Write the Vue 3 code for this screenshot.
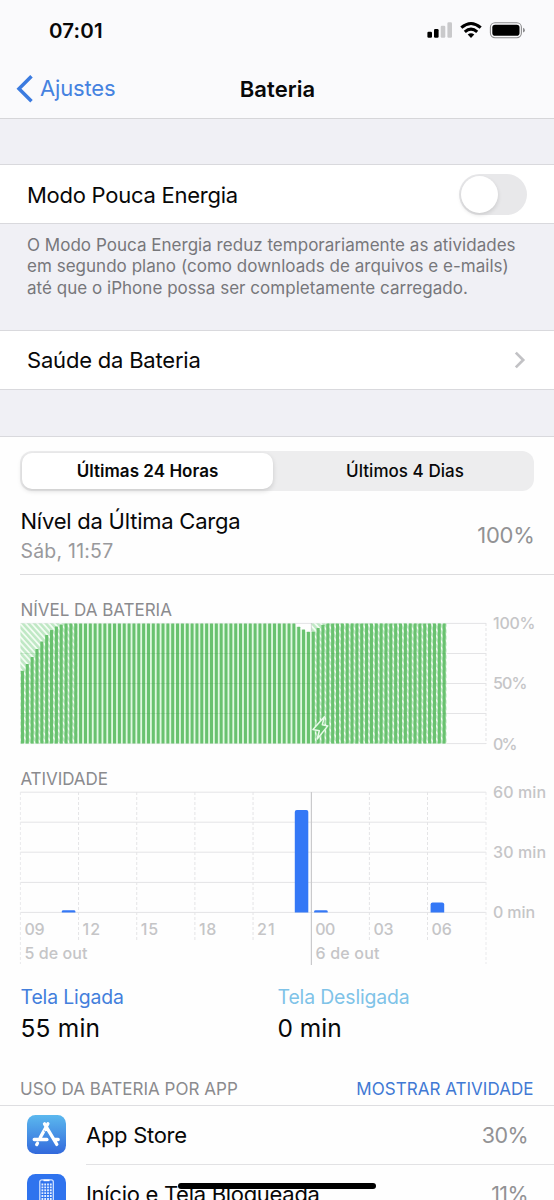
<script setup>
const X0 = 20.4
const PITCH = 4.847
const TOP = 23.4
const BOTTOM = 143.6
const special = {
  0: 70.8, 1: 64, 2: 57, 3: 49, 4: 41.5, 5: 35, 6: 30, 7: 26.5, 8: 24.4,
  57: 26.7, 58: 29.6, 59: 31.8, 60: 31.8, 61: 28, 62: 24.8,
}
const bars = Array.from({ length: 88 }, (_, i) => {
  const y = special[i] ?? TOP
  return { x: X0 + 0.5 + i * PITCH, y, h: BOTTOM - y }
})
const gaps = bars
  .map((b, i) => ({ x: b.x + 3.1, y: Math.max(b.y, bars[i + 1]?.y ?? b.y), i }))
  .filter((g) => g.i >= 11 && g.i < 60)
const hourX = (h) => X0 + (h * 465.3) / 24
const hours = ['09', '12', '15', '18', '21', '00', '03', '06'].map((t, i) => ({ t, x: hourX(i * 3) }))
const levelGrid = [23.4, 53.5, 83.5, 113.5, 143.6]
const activityGrid = [32.2, 62.2, 92.2, 122.4, 152.4]
const levelLabels = [{ t: '100%', y: 29.2, w: 42.5 }, { t: '50%', y: 89.3, w: 34.5 }, { t: '0%', y: 149.5, w: 24.5 }]
const activityLabels = [{ t: '60 min', y: 38, w: 53 }, { t: '30 min', y: 98, w: 53 }, { t: '0 min', y: 158, w: 42 }]
</script>

<template>
  <main class="phone">
    <header class="top">
      <div class="status">
        <span class="time">07:01</span>
        <svg class="status-icons" width="100" height="20" viewBox="0 0 100 20">
          <rect x="0.4" y="11.8" width="4.6" height="6" rx="1.2" />
          <rect x="7" y="9" width="4.6" height="8.8" rx="1.2" />
          <g fill="#c9c9cb">
            <rect x="13.7" y="5.8" width="4.6" height="12" rx="1.2" />
            <rect x="20.4" y="2.2" width="4.6" height="15.6" rx="1.2" />
          </g>
          <g fill="none" stroke="#000" stroke-width="3.1">
            <path d="M34.3 7.6 Q44 -0.6 53.7 7.6" />
            <path d="M37.8 11.8 Q44 6.4 50.2 11.8" />
          </g>
          <path d="M40.7 14.5 Q44 12.1 47.3 14.5 L44 17.9 Z" />
          <rect x="63.4" y="2.7" width="31" height="15" rx="4.6" fill="none" stroke="#8d8d8f" stroke-width="1.1" />
          <rect x="65.3" y="4.7" width="27.2" height="11" rx="2.8" />
          <path d="M96 7.8 Q97.9 8.5 97.9 10.2 Q97.9 11.9 96 12.6 Z" fill="#8d8d8f" />
        </svg>
      </div>
      <nav class="nav">
        <div class="back">
          <svg width="18" height="30" viewBox="0 0 18 30"><path d="M16.5 2.2 L4 14.7 L16.5 27.2" fill="none" stroke="#3b7be0" stroke-width="3.5" /></svg>
          <span>Ajustes</span>
        </div>
        <h1>Bateria</h1>
      </nav>
    </header>

    <section class="row power">
      <span>Modo Pouca Energia</span>
      <div class="switch"><i></i></div>
    </section>
    <div class="note">
      <p>O Modo Pouca Energia reduz temporariamente as atividades</p>
      <p>em segundo plano (como downloads de arquivos e e-mails)</p>
      <p>até que o iPhone possa ser completamente carregado.</p>
    </div>
    <section class="row health">
      <span>Saúde da Bateria</span>
      <svg width="13" height="18" viewBox="0 0 13 18"><path d="M1.8 1.6 L9.2 9 L1.8 16.4" fill="none" stroke="#c2c2c5" stroke-width="2.7" /></svg>
    </section>

    <section class="usage">
      <div class="segments">
        <span class="seg active"><b>Últimas 24 Horas</b></span>
        <span class="seg"><em>Últimos 4 Dias</em></span>
      </div>
      <div class="charge">
        <div>
          <p class="charge-title">Nível da Última Carga</p>
          <p class="charge-sub">Sáb, 11:57</p>
        </div>
        <span class="charge-value">100%</span>
      </div>

      <svg class="chart" width="554" height="160" viewBox="0 0 554 160">
        <defs>
          <pattern id="hatch" width="4.3" height="4.3" patternUnits="userSpaceOnUse" patternTransform="rotate(-42)">
            <rect width="4.3" height="4.3" fill="#f3fcf3" />
            <rect width="2.5" height="4.3" fill="#bfe8c4" />
          </pattern>
        </defs>
        <text class="caption" x="20.4" y="15.7" textLength="151.5">NÍVEL DA BATERIA</text>
        <path v-for="y in levelGrid" :key="y" :d="`M20.4 ${y} H486`" stroke="#e4e4e6" />
        <path d="M486 23 V144" stroke="#e3e3e5" stroke-dasharray="3 2" />
        <path d="M311.4 23 V144" stroke="#c8c8ca" />
        <rect x="20.4" :y="TOP" width="57.5" :height="BOTTOM - TOP" fill="url(#hatch)" />
        <rect x="311.6" :y="TOP" width="135" :height="BOTTOM - TOP" fill="url(#hatch)" />
        <rect v-for="g in gaps" :key="g.i" :x="g.x" :y="g.y" width="1.75" :height="BOTTOM - g.y" fill="#e0fae1" />
        <rect v-for="(b, i) in bars" :key="i" :x="b.x" :y="b.y" width="3.1" :height="b.h" rx="0.5" fill="#69c26f" />
        <path v-for="y in [53.5, 83.5, 113.5]" :key="'g' + y" :d="`M20.4 ${y} H446`" stroke="#359640" stroke-opacity=".14" />
        <path d="M324.4 116.8 L313 129.6 L319.3 130.8 L317.2 139 L327.8 125.9 L322.3 124.8 Z" fill="#69c26f" stroke="#e9fbe9" stroke-width="1.5" stroke-linejoin="round" />
        <text v-for="l in levelLabels" :key="l.t" class="axis" x="493" :y="l.y" :textLength="l.w">{{ l.t }}</text>
      </svg>

      <svg class="chart" width="554" height="210" viewBox="0 0 554 210">
        <text class="caption" x="20.4" y="24.5" textLength="87.5">ATIVIDADE</text>
        <path v-for="y in activityGrid" :key="y" :d="`M20.4 ${y} H486`" stroke="#e4e4e6" />
        <path d="M20.4 32 V204 M486 32 V204" stroke="#eaeaec" stroke-dasharray="3 2" />
        <path v-for="h in [3, 6, 9, 12, 18, 21]" :key="h" :d="`M${hourX(h)} 32 V182`" stroke="#e4e4e6" stroke-dasharray="3 2" />
        <path d="M311.4 32 V205" stroke="#cacacc" stroke-width="1.2" />
        <g fill="#3478f6">
          <path d="M61.8 152.4 V151.4 Q61.8 150.2 63.3 150.2 H73.9 Q75.4 150.2 75.4 151.4 V152.4 Z" />
          <path d="M294.8 152.4 V52 Q294.8 50 296.8 50 H306.3 Q308.3 50 308.3 52 V152.4 Z" />
          <path d="M314.1 152.4 V151.4 Q314.1 150.2 315.6 150.2 H326.2 Q327.7 150.2 327.7 151.4 V152.4 Z" />
          <path d="M430.6 152.4 V144.4 Q430.6 142.4 432.6 142.4 H442.2 Q444.2 142.4 444.2 144.4 V152.4 Z" />
        </g>
        <text v-for="h in hours" :key="h.t" class="axis" :x="h.x + 4" y="174.5" :textLength="h.t.includes('1') ? 17.5 : 20.2">{{ h.t }}</text>
        <text class="axis" x="24.4" y="199" textLength="63">5 de out</text>
        <text class="axis" x="315.4" y="199" textLength="64">6 de out</text>
        <text v-for="l in activityLabels" :key="l.t" class="axis" x="493" :y="l.y" :textLength="l.w">{{ l.t }}</text>
      </svg>

      <div class="totals">
        <div><p class="on">Tela Ligada</p><p class="total spaced">55 min</p></div>
        <div><p class="off">Tela Desligada</p><p class="total">0 min</p></div>
      </div>
      <div class="list-head"><span>USO DA BATERIA POR APP</span><a>MOSTRAR ATIVIDADE</a></div>
      <div class="app">
        <svg width="39" height="39" viewBox="0 0 39 39">
          <defs><linearGradient id="store" x2="0" y2="1"><stop stop-color="#5bb8ee" /><stop offset="1" stop-color="#3269dc" /></linearGradient></defs>
          <rect width="39" height="39" rx="8.5" fill="url(#store)" />
          <g stroke="#fff" stroke-width="3.3" stroke-linecap="round" fill="none">
            <path d="M20.9 8.8 L13.2 22.6 M17.5 8.8 L29.8 29.4 M7.2 24.5 H20 M27.2 24.5 H31.2 M10.5 28.2 L9.7 29.6" />
          </g>
          <path d="M17.3 15.5 L22.8 25" stroke="#448ce3" stroke-width="0.8" />
        </svg>
        <div class="app-body"><span>App Store</span><span class="pct">30%</span></div>
      </div>
      <div class="app">
        <svg width="39" height="39" viewBox="0 0 39 39">
          <rect width="39" height="39" rx="8.5" fill="#2f73ee" />
          <rect x="12.8" y="5.8" width="13.5" height="29" rx="2" fill="none" stroke="#d9e8ff" stroke-width="1.2" />
          <path d="M16.5 6.4 H22.5" stroke="#fff" stroke-width="1.6" />
          <path d="M15.4 9.5 V27 M18.2 9.5 V27 M21 9.5 V27 M23.8 9.5 V27" stroke="#e5efff" stroke-width="1.8" stroke-dasharray="1.9 1" />
        </svg>
        <div class="app-body"><span>Início e Tela Bloqueada</span><span class="pct">11%</span></div>
      </div>
    </section>
    <div class="home"></div>
  </main>
</template>

<style>
body { margin: 0; overflow: hidden; }
</style>
<style scoped>
* { box-sizing: border-box; }
.phone { position: relative; width: 554px; height: 1200px; overflow: hidden; background: #f0f0f5; font-family: Inter, "Liberation Sans", sans-serif; font-size: 22px; letter-spacing: -0.26px; color: #080808; }
p, h1 { margin: 0; }
span, p, h1, a, b, em { white-space: nowrap; }
.top { height: 119px; background: #fafafc; border-bottom: 1px solid #d6d6d9; }
.status { height: 60px; display: flex; justify-content: space-between; padding: 20px 27px 0 49px; }
.time { font-size: 20.5px; font-weight: 600; line-height: 21px; letter-spacing: 0.15px; }
.nav { display: grid; grid-template-columns: 1fr auto 1fr; align-items: center; height: 57px; padding: 0 14px 0 15px; }
.back { display: flex; align-items: center; gap: 7px; color: #4582e0; letter-spacing: -0.15px; }
.back span { margin-top: -1px; }
h1 { font-size: 22px; font-weight: 600; line-height: 28px; letter-spacing: 0.05px; }
.row { display: flex; align-items: center; justify-content: space-between; background: #fff; border: solid #d9d9dd; border-width: 1px 0; padding: 0 27px; }
.power { margin-top: 45px; height: 60px; }
.power span { padding-top: 1.5px; }
.switch { width: 68px; height: 41px; border-radius: 21px; background: #e8e8ea; padding: 2px; }
.switch i { display: block; width: 37px; height: 37px; border-radius: 50%; background: #fff; box-shadow: 0 2px 4px rgba(0,0,0,.13); }
.note { height: 106px; padding: 10.8px 27px; font-size: 17px; line-height: 21.4px; letter-spacing: 0.025px; color: #77777b; }
.health { height: 60px; letter-spacing: -0.2px; }
.usage { margin-top: 46px; height: 764px; background: #fefefe; border-top: 1px solid #d9d9dd; }
.segments { display: flex; height: 40px; margin: 14px 20px 0; padding: 2px; border-radius: 12px; background: #ededee; font-size: 17px; letter-spacing: 0.04px; }
.seg { display: flex; flex: none; align-items: center; justify-content: center; width: 264px; }
.seg.active { width: 251px; border-radius: 10px; background: #fff; box-shadow: 0 2px 5px rgba(0,0,0,.15); }
.seg b { font-weight: 600; }
.seg em { font-style: normal; font-weight: 500; }
.charge { display: flex; justify-content: space-between; align-items: center; height: 84px; margin-left: 20px; padding: 6px 19.5px 0 0.5px; border-bottom: 1px solid #dcdcde; }
.charge-title { line-height: 30px; letter-spacing: -0.23px; }
.charge-sub { font-size: 19.4px; line-height: 28px; padding-top: 1px; letter-spacing: 0.25px; color: #99999c; }
.charge-value { margin-top: -2px; color: #929294; }
.chart { display: block; letter-spacing: 0; }
.chart:first-of-type { margin-top: 25px; }
.caption { font-size: 17px; fill: #8b8b8e; }
.axis { font-size: 16px; font-weight: 500; fill: #c5c5c7; }
.totals { display: grid; grid-template-columns: 257px 1fr; padding-left: 20.5px; margin-top: 13px; height: 65px; }
.on, .off { font-size: 19.4px; line-height: 28px; letter-spacing: -0.12px; color: #437fdc; }
.off { color: #7fc3e8; }
.total { font-size: 24.5px; line-height: 34px; letter-spacing: 0; }
.spaced { letter-spacing: 0.2px; }
.list-head { display: flex; justify-content: space-between; height: 58px; padding: 29.5px 20.5px 0 20px; font-size: 17px; line-height: 22px; letter-spacing: 0.03px; color: #8b8b8e; border-bottom: 1px solid #dedee1; }
.list-head a { color: #4179d4; }
.app { display: flex; align-items: flex-start; height: 59px; padding-left: 27px; }
.app > svg { margin-top: 9px; flex: none; }
.app-body { flex: 1; display: flex; align-items: center; justify-content: space-between; height: 59px; margin-left: 20px; padding: 0 26px 1px 0; border-bottom: 1px solid #e2e2e4; letter-spacing: -0.29px; }
.pct { font-size: 21.5px; letter-spacing: -0.6px; color: #929294; }
.home { position: absolute; left: 178px; top: 1183px; width: 198px; height: 6px; border-radius: 3px; background: #000; }
</style>
